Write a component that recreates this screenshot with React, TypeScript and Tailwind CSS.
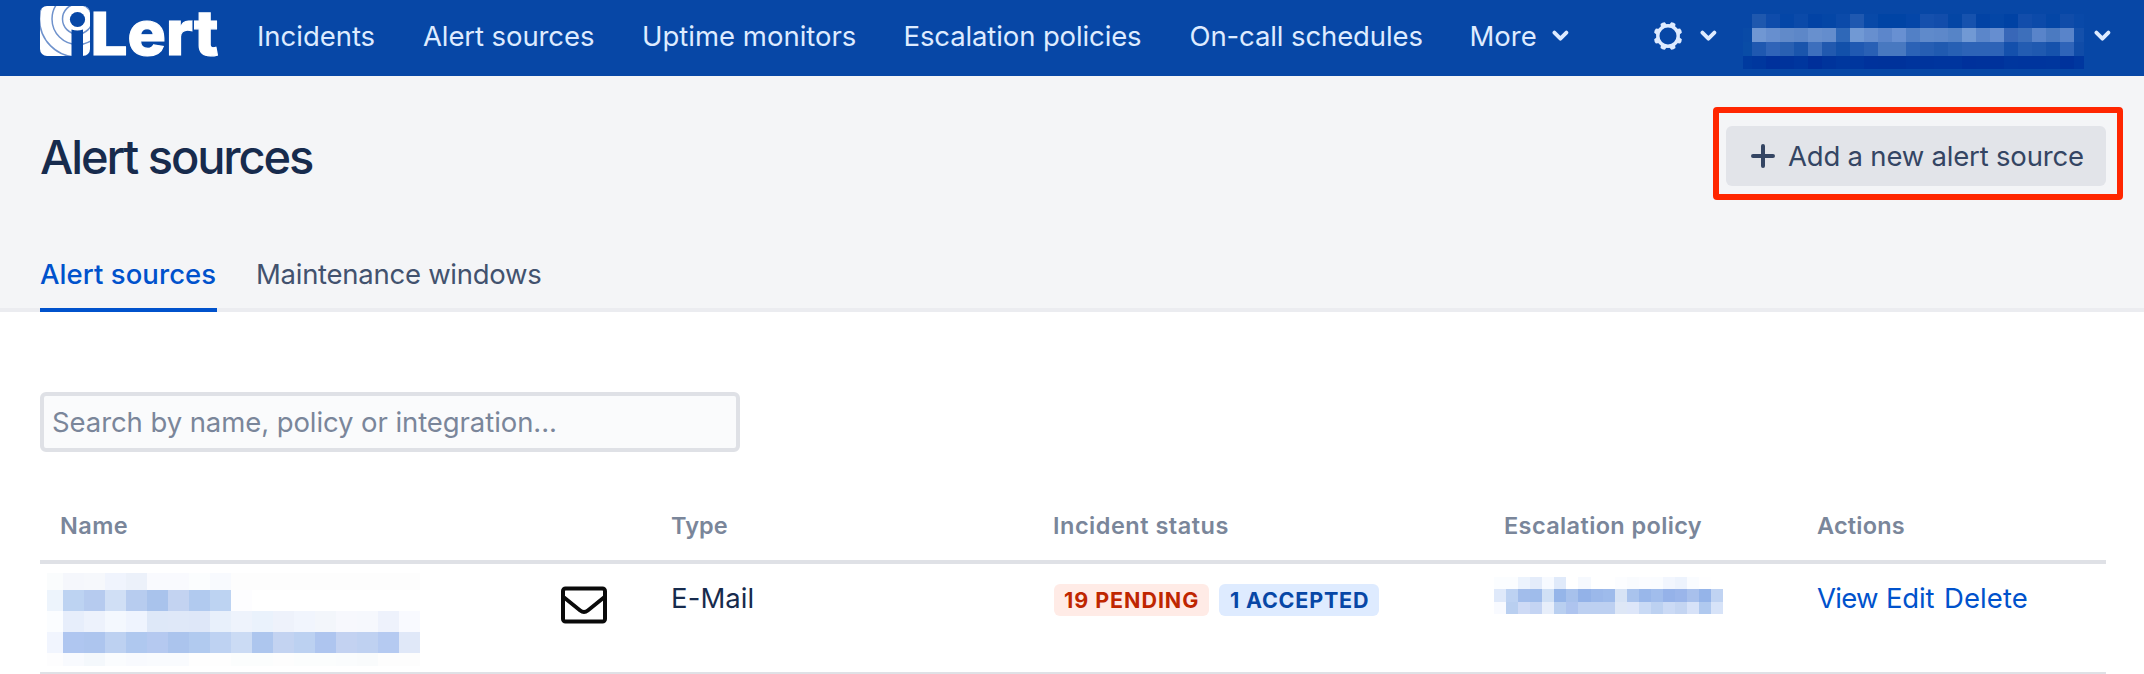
import type { ReactNode } from "react";

const USER_MOSAIC = {
  first: 9,
  cell: 14,
  heights: [14, 14, 14, 13],
  rows: [
    "0747a6 1f58ae 0f4cab 0446a7 0b4aa9 0243a5 0446a6 0b4aa9 1f58b0 0849a8 0044a5 0044a5 0446a8 1550ad 124dab 0446a5 1652ae 0243a5 0446a6 0042a4 124dab 0c4aa9 0446a6 104ca9 0949a8",
    "094aa6 7097d3 678fcf 618ac9 5d87c8 6890ce 648dcd 2f68b8 7199d4 678fcf 5c86cb 6890d2 5280c6 5f8acb 5d88ca 5684c7 7199d4 5b86ca 668ed0 3867b8 3d6fbb 5984ca 4b7ac1 5984ca 1450ab",
    "094ca6 1f58b0 3064b8 2960b2 1a55ac 3d6fbd 2159af 1250aa 2059b2 2960b5 4878c0 4878c0 2b62b6 265eb3 205ab0 2760b4 2d63b7 2d63b7 2d63b7 1450ac 235cb2 1f59b0 1652ac 2f64b9 104ca8",
    "003a9f 00379e 00319c 00339c 00369e 002f9a 00349c 00379e 00369e 00329c 00329b 00329b 00349d 00349d 00359e 00359e 00319c 00329c 00329c 00369e 00359e 00359e 00369e 00329c 00379f",
  ],
};

const NAME_MOSAIC = {
  first: 16,
  cell: 21,
  heights: [17, 21, 21, 21, 13],
  rows: [
    "fafcfd f5f7fc f6f8fc f0f4fd ecf1fa f9fafe f9fafe fbfdfe f8fafe fdfdfd fdfdfd fdfdfd fdfdfd fdfdfd fdfdfd fdfdfd fdfdfd fdfdfd",
    "edf4fc bdd3f2 b6cbef d0dff5 b7ccef a9c3ec c3d3f1 b1caef bdd3f2 fdfdff ffffff ffffff ffffff ffffff ffffff ffffff ffffff ffffff",
    "fbfdff e7eefb edf2fc f4f8fe eff4fe dee8f8 dfe8f8 dee7f8 e8f0fb eef3fc eaf2fc eef2fb f1f5fd f3f6fb f7f8fd f6f8fd eef2fc f9faff",
    "f1f5fe afc6f0 adc5ee bdd1f1 afc8ef b5c9f0 abc4ed b1caef bed2f2 cbdbf4 adc6ee c3d3f1 bcd1f1 aec5ef c3d2f1 bfd1f1 b5caf1 e0e8f8",
    "fdfdfe f8fafe f4f8fc fafcfe f8fafe f9fbfe f9fbfe fefefe fefefe fbfdfd fbfdfd fdfdfd fbfdfd fbfdfd fafcfd f9fbfc fdfdfd fdfdfd",
  ],
};

const POLICY_MOSAIC = {
  first: 12.07,
  cell: 12.07,
  heights: [12, 13, 12],
  rows: [
    "fbfdff fbfdff ecf3fd e4ecfa f7faff e0eafa ffffff f6f9fe ffffff ffffff fcfdff f9fbfe fbfcff fafcff f2f6fe edf3fd fafcff fefeff ffffff",
    "dfe9fa bdd2f2 a2bdeb 9fbceb d0e0f5 95b5e9 a7c1ec 93b2e8 9bb8ea 9ebbeb d7e3f5 a9c3ed 99b7ea a1bdec 95b2e9 9ab5ea a8c0ec 95b4e9 c0d3f2",
    "f8faff b9cff0 cedaf5 c4d4f3 e7eefa b9cff0 aec4ef bdd0f1 bdd0f1 bdd0f1 dee7f6 dde6f9 c9daf5 bcd1f1 cbdaf5 c4d5f2 d7e2f8 b0c9ef d7e3f8",
  ],
};

type MosaicData = typeof USER_MOSAIC;

/* Pixelated cover for private values */
function Mosaic({ data, width, className }: { data: MosaicData; width: number; className?: string }) {
  const height = data.heights.reduce((a, b) => a + b, 0);
  let y = 0;
  return (
    <svg width={width} height={height} viewBox={`0 0 ${width} ${height}`} shapeRendering="crispEdges" className={className} aria-hidden="true">
      {data.rows.map((row, r) => {
        const top = y;
        y += data.heights[r];
        return row.split(" ").map((color, c) => (
          <rect
            key={`${r}-${c}`}
            x={c === 0 ? 0 : data.first + (c - 1) * data.cell}
            y={top}
            width={c === 0 ? data.first : data.cell}
            height={data.heights[r]}
            fill={`#${color}`}
          />
        ));
      })}
    </svg>
  );
}

function Logo() {
  return (
    <svg width="180" height="52" viewBox="0 0 180 52" className="block shrink-0 overflow-visible" role="img" aria-label="iLert">
      <defs>
        <clipPath id="badge">
          <rect x="0" y="1" width="50" height="50" rx="7" />
        </clipPath>
      </defs>
      <g clipPath="url(#badge)">
        <rect width="50" height="52" fill="#fff" />
        <g fill="none" stroke="#6f92cc" strokeWidth="1.5">
          <circle cx="37.5" cy="14" r="15" />
          <circle cx="37.5" cy="14" r="25.5" />
          <circle cx="37.5" cy="14" r="38" />
        </g>
        <circle cx="37.5" cy="14.5" r="10.5" fill="#fff" />
        <circle cx="37.5" cy="14.5" r="7.6" fill="#0747a6" />
        <path d="M31.5 24.5Q37.5 26.5 43 24.5V52H31.5Z" fill="#0747a6" />
      </g>
      <g fill="#fff" stroke="#fff" strokeWidth="1.2" fontFamily="Inter, sans-serif" fontWeight="800">
        <text x="50.5" y="50" fontSize="58.5" textLength="37" lengthAdjust="spacingAndGlyphs">L</text>
        <text x="87.5" y="50" fontSize="62" textLength="91" lengthAdjust="spacingAndGlyphs">ert</text>
      </g>
    </svg>
  );
}

function Chevron({ className = "" }: { className?: string }) {
  return (
    <svg width="17" height="12" viewBox="0 0 17 12" fill="none" stroke="#deebff" strokeWidth="3.8" strokeLinecap="round" strokeLinejoin="round" className={`block shrink-0 ${className}`}>
      <path d="M2.4 2.6 8.4 8.7 14.4 2.6" />
    </svg>
  );
}

function Gear() {
  return (
    <svg width="28" height="28" viewBox="-14 -14 28 28" className="block shrink-0">
      <circle r="10.2" fill="none" stroke="#deebff" strokeWidth="3.4" />
      {[22.5, 67.5, 112.5, 157.5, 202.5, 247.5, 292.5, 337.5].map((a) => (
        <path key={a} d="M-3.2 -10.5 L-2.3 -14 Q0 -15 2.3 -14 L3.2 -10.5Z" fill="#deebff" transform={`rotate(${a})`} />
      ))}
    </svg>
  );
}

function Envelope() {
  return (
    <svg width="48" height="38" viewBox="0 0 48 38" fill="none" stroke="#0a0a0a" strokeWidth="4" strokeLinejoin="round" className="block">
      <rect x="3" y="2.5" width="42" height="33" rx="2.5" />
      <path d="M3.5 11 20.2 24.5Q24 27.5 27.8 24.5L44.5 11" strokeWidth="3.8" />
    </svg>
  );
}

function NavItem({ children, className }: { children: ReactNode; className: string }) {
  return <a className={`shrink-0 whitespace-nowrap ${className}`}>{children}</a>;
}

const GRID = "grid grid-cols-[630px_382px_451px_314px_289px]";

export default function App() {
  return (
    <div className="h-[674px] w-[2144px] overflow-hidden bg-white font-[Inter,sans-serif] text-[27.5px] leading-9 text-[#172b4d]">
      <header className="h-[76px] bg-[#0747a6] text-[#deebff]">
        <nav className="flex h-[72px] items-center pl-10">
          <div className="mr-[37px] flex h-[72px] w-[180px] items-start pt-[5px]">
            <Logo />
          </div>
          <NavItem className="w-[166px] tracking-[-0.03px]">Incidents</NavItem>
          <NavItem className="w-[219px] tracking-[-0.1px]">Alert sources</NavItem>
          <NavItem className="w-[261.5px]">Uptime monitors</NavItem>
          <NavItem className="w-[286px] tracking-[-0.12px]">Escalation policies</NavItem>
          <NavItem className="w-[280px] tracking-[-0.11px]">On-call schedules</NavItem>
          <NavItem className="w-[82px]">More</NavItem>
          <Chevron />
          <div className="ml-[85px] flex items-center">
            <Gear />
            <Chevron className="ml-[18px]" />
          </div>
          <Mosaic data={USER_MOSAIC} width={341} className="ml-[26px] mt-[11px] block shrink-0" />
          <Chevron className="ml-[10px]" />
        </nav>
      </header>

      <section className="flex h-[236px] flex-col border-b-4 border-[#ebecf0] bg-[#f4f5f7] pl-10 pr-[38px]">
        <div className="flex h-[110px] items-end justify-between">
          <h1 className="-mb-[3px] text-[47px] font-[550] leading-[64px] tracking-[-2.1px]">Alert sources</h1>
          <button className="relative flex h-[60px] w-[380px] items-center rounded-md bg-[#e2e4e9] pl-[25px] text-[#344563]">
            <svg width="26" height="26" viewBox="0 0 26 26" fill="none" stroke="currentColor" strokeWidth="4" strokeLinecap="round" className="-ml-px shrink-0">
              <path d="M13 3v20M3 13h20" />
            </svg>
            <span className="ml-3 whitespace-nowrap tracking-[-0.2px]">Add a new alert source</span>
            <span className="pointer-events-none absolute -bottom-[14px] -left-[13px] -right-[17px] -top-[19px] rounded border-[6px] border-[#ff2600]" />
          </button>
        </div>
        <div className="-mb-1 mt-auto flex gap-10">
          <a className="flex h-[58px] w-[177px] border-b-4 border-[#0052cc] font-medium tracking-[0.07px] text-[#0052cc]">
            <span className="mt-[2px] whitespace-nowrap">Alert sources</span>
          </a>
          <a className="-ml-px mt-[2px] whitespace-nowrap tracking-[-0.27px] text-[#42526e]">Maintenance windows</a>
        </div>
      </section>

      <main className="pl-10 pr-[38px] pt-20">
        <input
          className="block h-[60px] w-[700px] rounded-md border-4 border-[#dfe1e6] bg-[#fafbfc] px-2 tracking-[-0.08px] outline-none placeholder:text-[#7a869a] placeholder:opacity-100"
          placeholder="Search by name, policy or integration..."
        />

        <div className={`${GRID} mt-12 h-[60px] items-start border-b-4 border-[#dfe1e6] box-content text-[23.5px] font-semibold text-[#7a869a]`}>
          <div className="pl-5 pt-2 tracking-[0.4px]">Name</div>
          <div className="pl-px pt-2 tracking-[0.1px]">Type</div>
          <div className="pl-px pt-2 tracking-[0.5px]">Incident status</div>
          <div className="pl-px pt-2 tracking-[0.38px]">Escalation policy</div>
          <div className="pt-2 tracking-[0.2px]">Actions</div>
        </div>

        <div className={`${GRID} h-[110px] items-start border-b-2 border-[#dfe1e6]`}>
          <div className="flex items-start pl-[7px] pt-[9px]">
            <Mosaic data={NAME_MOSAIC} width={373} className="block shrink-0" />
            <div className="ml-[140px] mt-[13px]">
              <Envelope />
            </div>
          </div>
          <div className="pl-px pt-4 tracking-[0.1px]">E-Mail</div>
          <div className="flex gap-[10px] pl-[2px] pt-5 text-[21.5px] font-bold leading-8">
            <span className="h-8 w-[155px] whitespace-nowrap rounded-md bg-[#ffebe6] pl-[10px] tracking-[0.95px] text-[#bf2600]">19 PENDING</span>
            <span className="h-8 w-[160px] whitespace-nowrap rounded-md bg-[#deebff] pl-[11px] tracking-[0.8px] text-[#0747a6]">1 ACCEPTED</span>
          </div>
          <div className="-ml-[9.5px] pt-[13px]">
            <Mosaic data={POLICY_MOSAIC} width={230} className="block" />
          </div>
          <div className="flex pt-4 text-[#0052cc]">
            <a className="w-[69px] tracking-[-0.7px]">View</a>
            <a className="w-[58px] tracking-[-0.2px]">Edit</a>
            <a className="tracking-[0.1px]">Delete</a>
          </div>
        </div>
      </main>
    </div>
  );
}
